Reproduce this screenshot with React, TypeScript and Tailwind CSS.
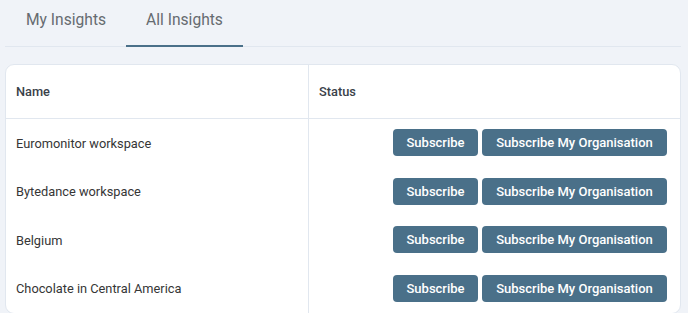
import React from 'react';

const rows = [
  'Euromonitor workspace',
  'Bytedance workspace',
  'Belgium',
  'Chocolate in Central America',
];

const tabs = [
  { label: 'My Insights', active: false },
  { label: 'All Insights', active: true },
];

const App: React.FC = () => {
  return (
    <div
      className="min-h-screen bg-[#f0f3f8] pl-[5px] pr-[7px]"
      style={{ fontFamily: 'Roboto, "Liberation Sans", sans-serif' }}
    >
      <div className="flex border-b border-[#e1e7ef] h-[47px] pl-px">
        {tabs.map((tab) => (
          <div
            key={tab.label}
            className={`px-[20px] pt-[8px] text-[15.6px] leading-6 text-[#666b70] ${
              tab.active ? 'border-b-2 border-[#4a7089] -mb-px' : ''
            }`}
          >
            {tab.label}
          </div>
        ))}
      </div>

      <div className="mt-[17px] bg-white border border-[#e1e7ef] rounded-[9px] overflow-hidden">
        <div className="grid grid-cols-[303px_1fr] h-[54px] border-b border-[#e1e7ef]">
          <div className="flex items-center px-[10px] text-[12.8px] font-medium text-[#3a4149] border-r border-[#e1e7ef]">
            Name
          </div>
          <div className="flex items-center px-[10px] text-[12.8px] font-medium text-[#3a4149]">
            Status
          </div>
        </div>

        {rows.map((name) => (
          <div key={name} className="grid grid-cols-[303px_1fr] h-[48.5px]">
            <div className="flex items-center px-[10px] text-[12.8px] text-[#363636] border-r border-[#e1e7ef]">
              {name}
            </div>
            <div className="flex items-center justify-end gap-[4px] pr-[13px] pb-[1px]">
              <button className="h-[27px] w-[85px] rounded-[4px] bg-[#4a7089] text-white text-[13px] font-medium">
                Subscribe
              </button>
              <button className="h-[27px] w-[185px] rounded-[4px] bg-[#4a7089] text-white text-[13px] font-medium">
                Subscribe My Organisation
              </button>
            </div>
          </div>
        ))}
      </div>
    </div>
  );
};

export default App;
